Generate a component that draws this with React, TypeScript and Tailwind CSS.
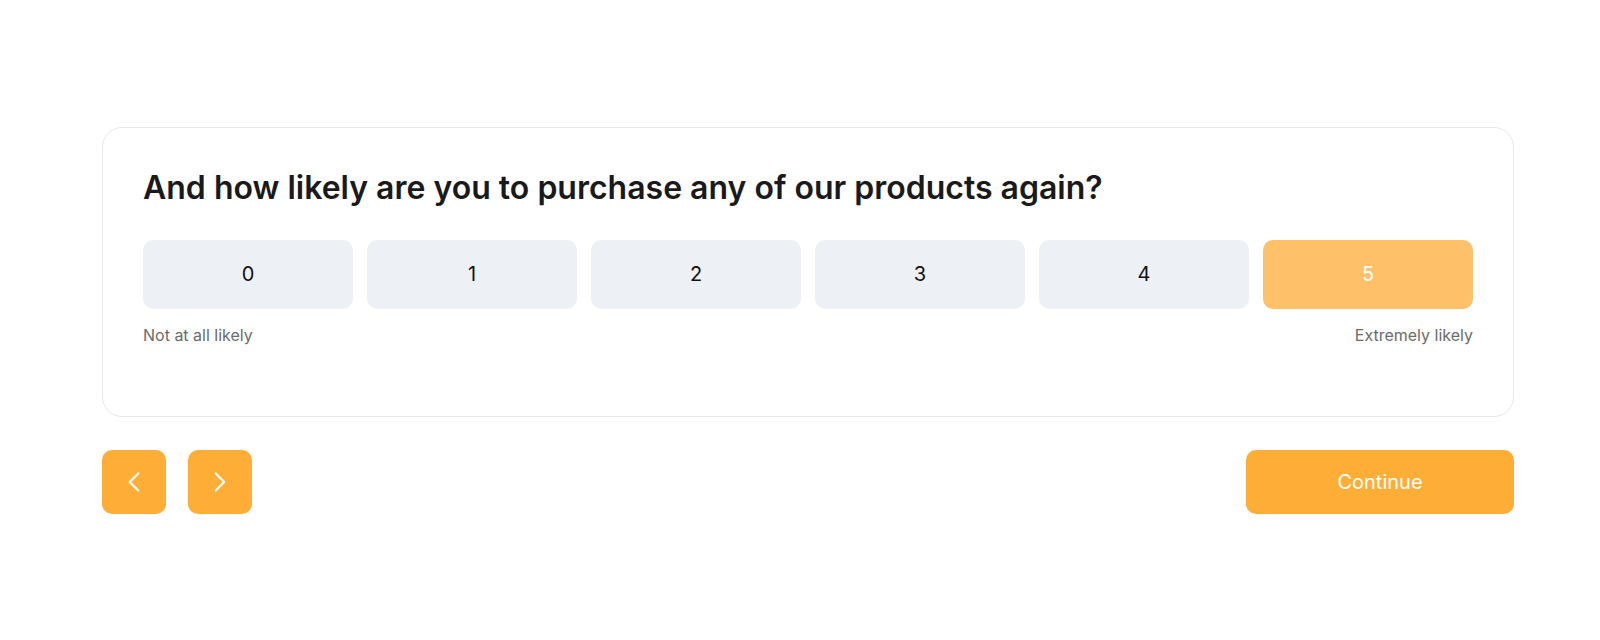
import { FC, useState } from 'react';
import { ChevronLeft, ChevronRight } from 'lucide-react';

const options = [0, 1, 2, 3, 4, 5];

const App: FC = () => {
  const [selected, setSelected] = useState<number>(5);

  return (
    <div className="min-h-[640px] w-full bg-white flex flex-col justify-center pl-[102px] pr-[86px] font-['Inter',sans-serif]">
      <div className="border border-[#e5e7eb] rounded-[20px] px-10 pt-[40px] pb-[69px]">
        <h1 className="text-[32px] leading-[40px] font-semibold text-[#1a1a1a]">
          And how likely are you to purchase any of our products again?
        </h1>
        <div className="mt-[32px] grid grid-cols-6 gap-[14px]">
          {options.map((n) => (
            <button
              key={n}
              type="button"
              onClick={() => setSelected(n)}
              className={
                n === selected
                  ? 'h-[69px] rounded-[10px] bg-[#fec16a] text-white text-[20px]'
                  : 'h-[69px] rounded-[10px] bg-[#edf0f5] text-[#111111] text-[20px]'
              }
            >
              {n}
            </button>
          ))}
        </div>
        <div className="mt-[14px] flex justify-between text-[16px] leading-6 text-[#6b6b6b]">
          <span>Not at all likely</span>
          <span>Extremely likely</span>
        </div>
      </div>

      <div className="mt-[33px] flex items-center justify-between">
        <div className="flex gap-[22px]">
          <button
            type="button"
            className="w-16 h-16 rounded-[10px] bg-[#feae36] flex items-center justify-center text-white"
          >
            <ChevronLeft className="w-[34px] h-[34px]" strokeWidth={1.6} />
          </button>
          <button
            type="button"
            className="w-16 h-16 rounded-[10px] bg-[#feae36] flex items-center justify-center text-white"
          >
            <ChevronRight className="w-[34px] h-[34px]" strokeWidth={1.6} />
          </button>
        </div>
        <button
          type="button"
          className="w-[268px] h-16 rounded-[10px] bg-[#feae36] text-white text-[20px]"
        >
          Continue
        </button>
      </div>
    </div>
  );
};

export default App;
